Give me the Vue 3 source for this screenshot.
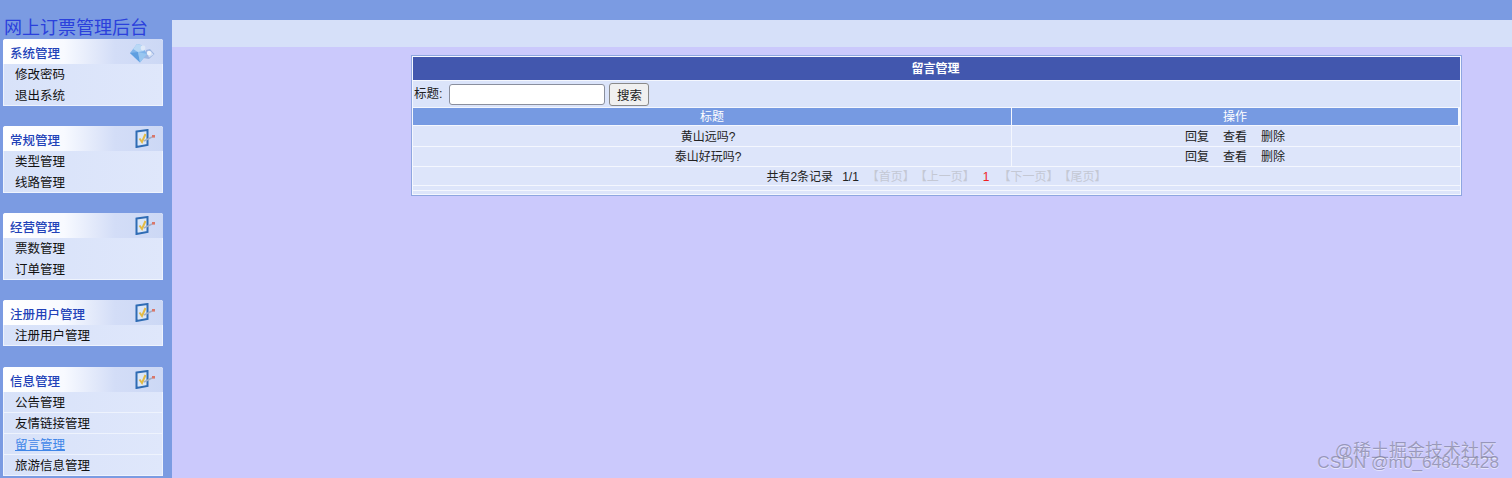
<script setup>
const menus = [
  { title: '系统管理', icon: 'gem', items: ['修改密码', '退出系统'] },
  { title: '常规管理', icon: 'check', items: ['类型管理', '线路管理'] },
  { title: '经营管理', icon: 'check', items: ['票数管理', '订单管理'] },
  { title: '注册用户管理', icon: 'check', items: ['注册用户管理'] },
  { title: '信息管理', icon: 'check', items: ['公告管理', '友情链接管理', '留言管理', '旅游信息管理'] }
]

const rows = ['黄山远吗?', '泰山好玩吗?']
const actions = ['回复', '查看', '删除']
</script>

<template>
  <div class="page">
    <aside class="sidebar">
      <h1 class="logo">网上订票管理后台</h1>
      <section v-for="menu in menus" :key="menu.title" class="menu">
        <div class="menu-head">
          <span class="menu-title">{{ menu.title }}</span>
          <svg v-if="menu.icon === 'gem'" class="menu-icon gem" width="26" height="20" viewBox="0 0 26 20">
            <path d="M17 7 L21 6 L25.5 11 L20 16 L14 15 Z" fill="#9db6e2" />
            <path d="M18 9 L22 8.5 L24.5 11.5 L20 14.5 Z" fill="#d5e0f5" />
            <path d="M8 1 L12 2 L18 11 L11 19.5 L1 10 Z" fill="#7fb4ea" />
            <path d="M1 10 L11 19.5 L9 9 Z" fill="#5f9fe0" />
            <path d="M9 9 L11 19.5 L18 11 Z" fill="#98c6f0" />
            <path d="M8 1 L12 2 L15 8 L9 9 L4 6 Z" fill="#b9d8f5" />
            <circle cx="14" cy="5" r="2.4" fill="#dfe9f8" />
            <circle cx="20" cy="10" r="2.2" fill="#eef3fc" />
          </svg>
          <svg v-else class="menu-icon" width="21" height="19" viewBox="0 0 21 19">
            <path d="M1.5 2.5 L12.5 1 L12.5 16 L1.5 18 Z" fill="#dbe7f8" stroke="#2f6cb4" stroke-width="2" />
            <path d="M4.5 9.5 L7 13 L10.5 5" fill="none" stroke="#e3bb45" stroke-width="2" />
            <path d="M9 12 L17 8" stroke="#a3aec6" stroke-width="1.5" />
            <rect x="17" y="6" width="3" height="2.6" fill="#d8776a" />
          </svg>
        </div>
        <ul class="menu-list">
          <li v-for="item in menu.items" :key="item" :class="{ active: item === '留言管理' }">{{ item }}</li>
        </ul>
      </section>
    </aside>

    <main class="main">
      <div class="top-strip"></div>
      <div class="panel">
        <table class="grid">
          <colgroup>
            <col class="col-title" />
            <col />
          </colgroup>
          <tbody>
            <tr>
              <td colspan="2" class="caption">留言管理</td>
            </tr>
            <tr>
              <td colspan="2" class="search">
                <span>标题:</span>
                <input type="text" class="search-input" />
                <button class="search-btn">搜索</button>
              </td>
            </tr>
            <tr class="head">
              <th>标题</th>
              <th>操作</th>
            </tr>
            <tr v-for="row in rows" :key="row" class="row">
              <td class="row-title">{{ row }}</td>
              <td class="actions">
                <span v-for="a in actions" :key="a">{{ a }}</span>
              </td>
            </tr>
            <tr>
              <td colspan="2" class="pager">
                <span class="count">共有2条记录</span>
                <span>1/1</span>
                <span class="off">【首页】</span>
                <span class="off">【上一页】</span>
                <span class="current">1</span>
                <span class="off">【下一页】</span>
                <span class="off">【尾页】</span>
              </td>
            </tr>
            <tr>
              <td colspan="2" class="slim"></td>
            </tr>
            <tr>
              <td colspan="2" class="slim thin"></td>
            </tr>
          </tbody>
        </table>
      </div>
    </main>

    <div class="mark mark-top">@稀土掘金技术社区</div>
    <div class="mark mark-bottom">CSDN @m0_64843428</div>
  </div>
</template>

<style>
body {
  margin: 0;
}
</style>

<style scoped>
.page {
  position: relative;
  display: flex;
  height: 478px;
  overflow: hidden;
  background: #7b9be2;
  font-family: "Liberation Sans", "Noto Sans CJK SC", sans-serif;
  font-size: 12px;
  color: #222;
}

.sidebar {
  width: 172px;
  flex-shrink: 0;
  padding: 18px 0 0 3px;
  box-sizing: border-box;
}

.logo {
  margin: 0;
  height: 21px;
  padding-left: 1px;
  font-size: 18px;
  font-weight: 400;
  line-height: 21px;
  color: #2a40dc;
  white-space: nowrap;
}

.menu {
  width: 160px;
  margin-bottom: 20px;
  background: linear-gradient(90deg, #d8e2f9, #dfe7fb);
  border-radius: 3px 3px 0 0;
  box-shadow: 1px 1px 0 #eef3fd inset, -1px -1px 0 #eef3fd inset;
}

.menu:nth-child(5) {
  margin-bottom: 21px;
}

.menu-head {
  display: flex;
  align-items: center;
  justify-content: space-between;
  height: 25px;
  padding: 0 7px;
  background: linear-gradient(90deg, #ffffff 0%, #f8faff 38%, #d3ddf7 70%, #ccd8f5 100%);
  border-radius: 3px 3px 0 0;
}

.menu-title {
  padding-top: 2px;
  font-size: 12.5px;
  font-weight: 500;
  color: #2242b8;
}

.gem {
  margin-right: 1px;
  margin-top: 2px;
}

.menu-list {
  margin: 0;
  padding: 0;
  list-style: none;
}

.menu-list li {
  height: 19px;
  padding: 1px 0 0 12px;
  line-height: 20px;
  font-size: 12.5px;
  color: #111;
  border-bottom: 1px solid transparent;
}

.menu:last-child .menu-list li {
  border-bottom-color: #eef3fd;
}

.menu-list li.active {
  color: #3f86e8;
  text-decoration: underline;
}

.main {
  flex: 1;
  padding-top: 20px;
  background: #cbc9fc;
  background-clip: content-box;
}

.top-strip {
  height: 27px;
  background: #d6e0f9;
}

.panel {
  width: 1051px;
  margin: 8px 0 0 239px;
  border: 1px solid #8ea6e0;
  box-sizing: border-box;
  background: #fff;
}

.grid {
  width: 100%;
  table-layout: fixed;
  border-collapse: separate;
  border-spacing: 1px;
  background: #f4f7fe;
}

.col-title {
  width: 598px;
}

.grid td,
.grid th {
  padding: 0;
  background: #dde5fa;
  text-align: center;
  font-size: 12px;
  font-weight: 400;
  line-height: 15px;
}

.grid td.caption {
  height: 21px;
  padding: 2px 2px 0 0;
  background: #4257ae;
  color: #fff;
  font-weight: 700;
}

.grid td.search {
  height: 26px;
  padding-left: 1px;
  text-align: left;
  background: #dbe4fa;
  font-size: 12.5px;
}

.search span {
  margin-right: 7px;
  vertical-align: -1px;
}

.search-input {
  width: 156px;
  height: 21px;
  box-sizing: border-box;
  margin-right: 4px;
  vertical-align: middle;
  background: #fff;
  border: 1px solid #8a8f9e;
  border-radius: 3px;
}

.search-btn {
  width: 40px;
  height: 23px;
  padding: 0;
  vertical-align: middle;
  font-family: inherit;
  font-size: 12.5px;
  color: #222;
  background: #f0f0f0;
  border: 1px solid #8a8a8a;
  border-radius: 3px;
}

.grid .head th {
  height: 15px;
  padding-top: 2px;
  background: #769ae2;
  color: #fff;
}

.head th:last-child {
  border-right: 2px solid #f4f7fe;
}

.grid .row td {
  height: 17px;
  padding-top: 2px;
}

.grid tr:nth-child(4) td {
  height: 18px;
}

.grid .row .row-title {
  padding-right: 8px;
}

.grid .row .actions {
  padding-right: 2px;
}

.actions span {
  margin: 0 7px;
}

.grid td.pager {
  height: 16px;
  padding-top: 2px;
  text-spacing-trim: space-all;
}

.pager span {
  margin-right: 8px;
}

.pager .count {
  margin-right: 9px;
}

.pager .off {
  margin-right: 0;
  color: #c4c8d4;
}

.pager .current {
  margin: 0 9px 0 8px;
  color: #f02020;
}

.grid td.slim {
  height: 4px;
}

.grid td.thin {
  height: 3px;
}

.mark {
  position: absolute;
  white-space: nowrap;
  color: rgba(120, 120, 150, 0.65);
  text-shadow: 0 1px 0 rgba(255, 255, 255, 0.5);
}

.mark-top {
  right: 15px;
  top: 436px;
  font-size: 18px;
}

.mark-bottom {
  right: 13px;
  top: 452px;
  font-size: 17.3px;
}
</style>
